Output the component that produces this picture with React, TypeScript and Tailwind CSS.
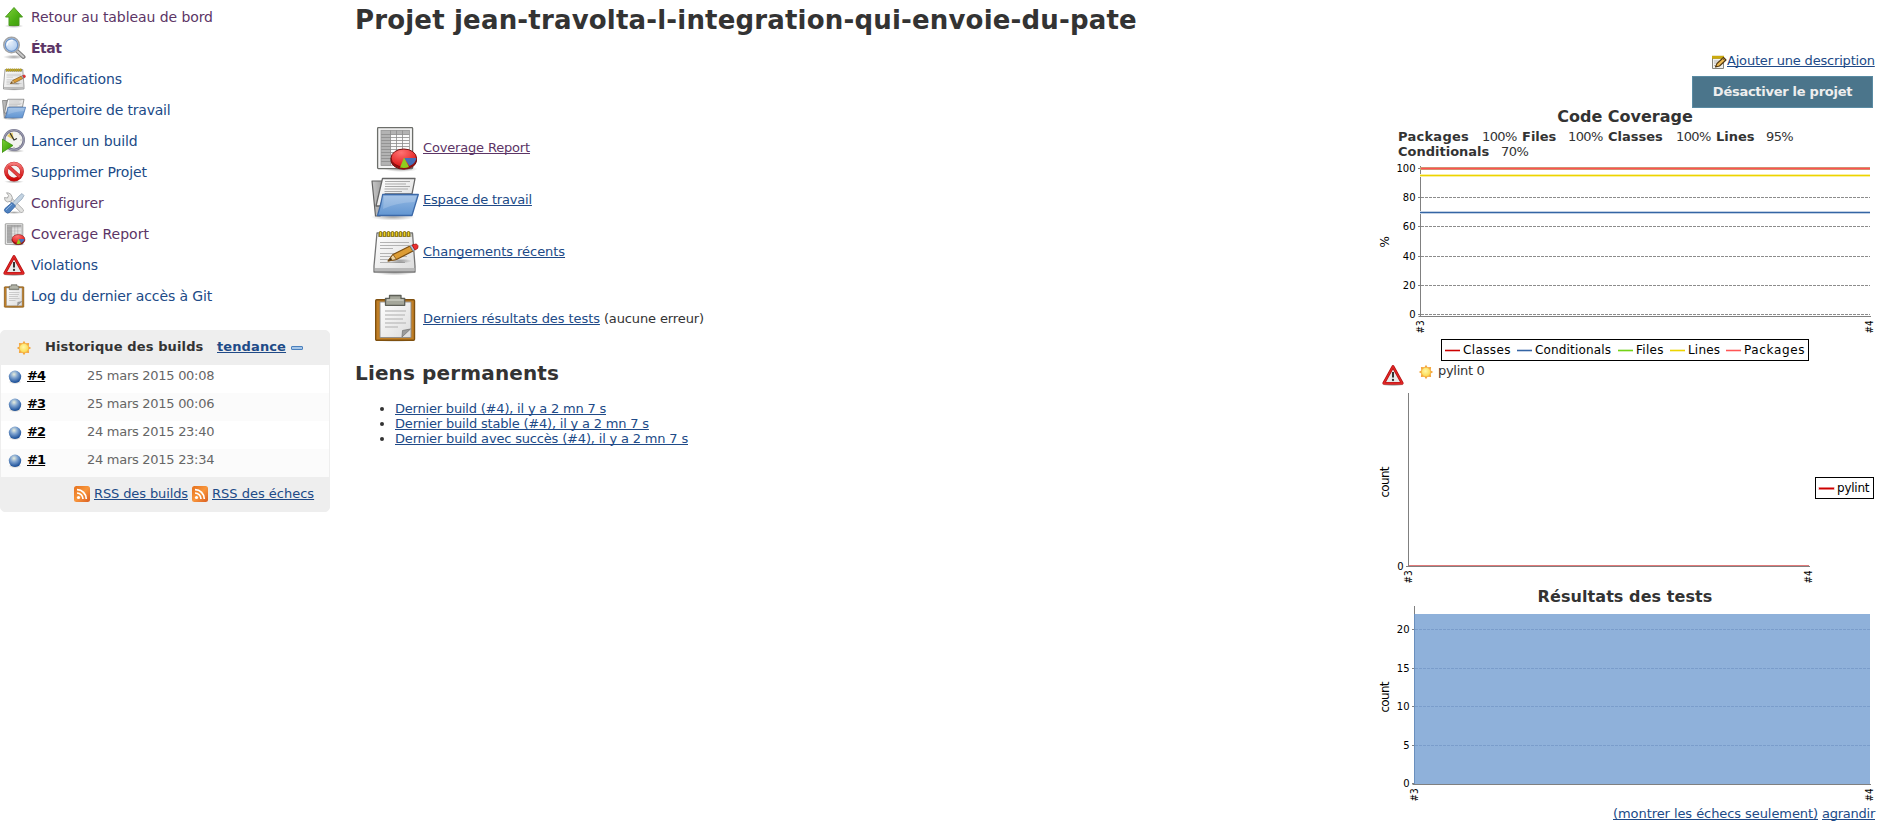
import type { ReactNode } from "react";

type IconProps = { className?: string };

const box = (children: ReactNode, className = "size-6") => (
  <svg viewBox="0 0 48 48" className={`${className} block shrink-0`} fill="none">
    {children}
  </svg>
);

const Gradients = () => (
  <svg className="absolute size-0" aria-hidden="true">
    <defs>
      <linearGradient id="green" x1="0" y1="0" x2="1" y2="1">
        <stop offset="0" stopColor="#7fd03a" />
        <stop offset="0.6" stopColor="#4cae14" />
        <stop offset="1" stopColor="#3f9a0c" />
      </linearGradient>
      <linearGradient id="paper" x1="0" y1="0" x2="1" y2="1">
        <stop offset="0" stopColor="#ffffff" />
        <stop offset="1" stopColor="#dcdcdc" />
      </linearGradient>
      <linearGradient id="folder" x1="0" y1="0" x2="0" y2="1">
        <stop offset="0" stopColor="#95b9e3" />
        <stop offset="1" stopColor="#6296d2" />
      </linearGradient>
      <linearGradient id="grey" x1="0" y1="0" x2="1" y2="0">
        <stop offset="0" stopColor="#c8c8c8" />
        <stop offset="1" stopColor="#8c8c8c" />
      </linearGradient>
      <linearGradient id="red" x1="0" y1="0" x2="0" y2="1">
        <stop offset="0" stopColor="#f57878" />
        <stop offset="1" stopColor="#cc0606" />
      </linearGradient>
      <linearGradient id="rss" x1="0" y1="0" x2="1" y2="1">
        <stop offset="0" stopColor="#e5701c" />
        <stop offset="0.5" stopColor="#f8963c" />
        <stop offset="1" stopColor="#d95e22" />
      </linearGradient>
      <radialGradient id="pie" cx="0.4" cy="0.2" r="0.8">
        <stop offset="0" stopColor="#ff7272" />
        <stop offset="1" stopColor="#dd1414" />
      </radialGradient>
      <radialGradient id="glass" cx="0.4" cy="0.35" r="0.7">
        <stop offset="0" stopColor="#e6effa" />
        <stop offset="1" stopColor="#a3c4ec" />
      </radialGradient>
      <radialGradient id="ball" cx="0.42" cy="0.3" r="0.65">
        <stop offset="0" stopColor="#e8eedd" />
        <stop offset="0.45" stopColor="#7fa3cf" />
        <stop offset="1" stopColor="#22559c" />
      </radialGradient>
      <radialGradient id="sun" cx="0.45" cy="0.4" r="0.6">
        <stop offset="0" stopColor="#fff7a8" />
        <stop offset="1" stopColor="#fbd84a" />
      </radialGradient>
      <radialGradient id="shade" cx="0.5" cy="0.5" r="0.5">
        <stop offset="0" stopColor="#000" stopOpacity="0.35" />
        <stop offset="1" stopColor="#000" stopOpacity="0" />
      </radialGradient>
    </defs>
  </svg>
);

const UpIcon = ({ className }: IconProps) =>
  box(
    <>
      <ellipse cx="24" cy="42" rx="19" ry="4" fill="url(#shade)" />
      <path d="M24 5 L41 24 H34 V41 H14 V24 H7 Z" fill="url(#green)" stroke="#4b9a1e" strokeWidth="2" strokeLinejoin="round" />
    </>,
    className,
  );

const SearchIcon = ({ className }: IconProps) =>
  box(
    <>
      <ellipse cx="24" cy="42" rx="22" ry="4.500" fill="url(#shade)" />
      <path d="M29 29 L43 42" stroke="#7d7d7d" strokeWidth="8" strokeLinecap="round" />
      <path d="M30 30 L42.500 41.500" stroke="#c9c9c9" strokeWidth="4" strokeLinecap="round" />
      <circle cx="19" cy="18" r="15.500" fill="url(#glass)" stroke="#a4a4a4" strokeWidth="3" />
      <circle cx="19" cy="18" r="12.500" stroke="#6b93c8" strokeWidth="2.500" />
      <path d="M10 19 C10 11 16 8 22 9" stroke="#fff" strokeWidth="3" opacity="0.8" />
    </>,
    className,
  );

const NotepadIcon = ({ className }: IconProps) =>
  box(
    <>
      <ellipse cx="24" cy="44.500" rx="20" ry="3" fill="url(#shade)" />
      <path d="M6 5 H41.500 L44 38 V44 H3 V38 Z" fill="url(#paper)" stroke="#757575" strokeWidth="1.300" strokeLinejoin="round" />
      <path d="M7 5.500 H40.500 V9 H7 Z" fill="#a5a38d" />
      <path d="M4 40 H43.500 V43 H4 Z" fill="#b9b9b9" />
      <path d="M9 14.500 H38 M9 17.500 H38 M9 20.500 H22 M9 25.500 H36 M9 28.500 H36 M9 31.500 H24 M9 34.500 H34" stroke="#b3b3b3" strokeWidth="1" />
      <path d="M9.500 4.500V7.500M13.500 4.500V7.500M17.500 4.500V7.500M21.500 4.500V7.500M25.500 4.500V7.500M29.500 4.500V7.500M33.500 4.500V7.500M37.500 4.500V7.500" stroke="#7d6500" strokeWidth="3.200" strokeLinecap="round" />
      <path d="M9.500 4.500V7.500M13.500 4.500V7.500M17.500 4.500V7.500M21.500 4.500V7.500M25.500 4.500V7.500M29.500 4.500V7.500M33.500 4.500V7.500M37.500 4.500V7.500" stroke="#e9cf2c" strokeWidth="1.700" strokeLinecap="round" />
      <ellipse cx="29" cy="33" rx="12" ry="2.500" fill="url(#shade)" />
      <path d="M17 33 L22 26.500 L39 18 L42 23 L25.500 31.500 Z" fill="#dc9c35" stroke="#7b4d10" strokeWidth="1.200" strokeLinejoin="round" />
      <path d="M17 33 L22 26.500 L25.500 31.500 Z" fill="#ecd3a3" stroke="#7b4d10" strokeWidth="0.800" />
      <path d="M17 33 L20 29.500 L21 32 Z" fill="#4a3210" />
      <path d="M39 18 L41 17 L44 22 L42 23 Z" fill="#a9c3d8" stroke="#6f8190" strokeWidth="0.600" />
      <path d="M41 17 L45 16 Q48 17 46.500 20.500 L44 22 Z" fill="#ec2f2f" stroke="#a50f0f" strokeWidth="0.800" />
    </>,
    className,
  );

const FolderIcon = ({ className }: IconProps) =>
  box(
    <>
      <ellipse cx="22" cy="41" rx="22" ry="3.500" fill="url(#shade)" />
      <path d="M1 5 H12 L16 20 L9 40 H4.500 Z" fill="url(#grey)" stroke="#626262" strokeWidth="1.200" strokeLinejoin="round" />
      <path d="M11.500 2.500 L5 30 H9 L14 18 H41 L44 2.500 Z" fill="url(#paper)" stroke="#666" strokeWidth="1.300" strokeLinejoin="round" />
      <path d="M14 5.500 H39 M14 8 H35 M14 10.500 H39 M13.500 13 H37 M13.500 15.500 H31" stroke="#a9a9a9" strokeWidth="1" />
      <path d="M11.700 18.500 H47.300 L41 39.500 H6.500 Q10 29 11.700 18.500 Z" fill="url(#folder)" stroke="#3c69a8" strokeWidth="1.300" strokeLinejoin="round" />
      <path d="M13 20 H45.500 L43.500 26 Q24 27 12 33 Z" fill="#fff" opacity="0.180" />
    </>,
    className,
  );

const ClockIcon = ({ className }: IconProps) =>
  box(
    <>
      <ellipse cx="26" cy="44" rx="19" ry="3.500" fill="url(#shade)" />
      <circle cx="24" cy="22" r="19.500" fill="#f3f3ee" stroke="#77778f" strokeWidth="5" />
      <circle cx="24" cy="22" r="20" stroke="#acacbe" strokeWidth="1.500" />
      <path d="M24 22 L10 14 Q14 8 21 7 Z" fill="#e6cb66" />
      <path d="M16 8 L24 22 L30 19" stroke="#34342f" strokeWidth="2.500" />
      <path d="M37 22h2M24 36v2M34 12l1-1M34 32l1 1" stroke="#999" strokeWidth="2" />
      <path d="M0 20 L22 33 L0 47 Z" fill="url(#green)" stroke="#3d8c12" strokeWidth="1.500" strokeLinejoin="round" />
    </>,
    className,
  );

const DeleteIcon = ({ className }: IconProps) =>
  box(
    <>
      <ellipse cx="24" cy="43.500" rx="20" ry="3" fill="url(#shade)" />
      <circle cx="24" cy="23" r="16" fill="#f4f4f4" stroke="#b52020" strokeWidth="7.500" />
      <path d="M12 12 L36 34" stroke="#b52020" strokeWidth="7" />
      <circle cx="24" cy="23" r="16" stroke="url(#red)" strokeWidth="6" />
      <path d="M12 12 L36 34" stroke="#e24242" strokeWidth="5" />
    </>,
    className,
  );

const ToolsIcon = ({ className }: IconProps) =>
  box(
    <>
      <ellipse cx="24" cy="43" rx="22" ry="3" fill="url(#shade)" />
      <path d="M15 15 L39 39" stroke="#999" strokeWidth="9" strokeLinecap="round" />
      <path d="M15 15 L39 39" stroke="#e2e2e0" strokeWidth="6.500" strokeLinecap="round" />
      <path d="M9 3.500 L13 9 L11 14 L5 13 Q4 20 11 22 L19 20 Q23 13 18 7 Q14 3 9 3.500Z" fill="#e6e6e4" stroke="#989898" strokeWidth="1.500" />
      <path d="M40 5 L44 9 L40 16 L26 29 L21 24 L34 10 Z" fill="#c3d3e2" stroke="#8298ad" strokeWidth="1.300" />
      <path d="M20 23 L27 30 L15 43 Q11 46 7 42 Q3 39 6 35 Z" fill="#4f82c0" stroke="#285a9c" strokeWidth="1.500" />
      <path d="M20 26 L8 38" stroke="#8db2df" strokeWidth="2" />
    </>,
    className,
  );

const ReportIcon = ({ className }: IconProps) =>
  box(
    <>
      <ellipse cx="30" cy="45" rx="17" ry="3" fill="url(#shade)" />
      <rect x="6.600" y="3.600" width="35" height="41" rx="0.800" fill="#f4f4f4" stroke="#6c6e6a" strokeWidth="1.300" />
      <rect x="10" y="6" width="28.500" height="36" fill="#fafafa" />
      <path d="M10 6 H38.500 V10.500 H10 Z M10 10 H19.500 V42 H10 Z" fill="#b3b3b3" />
      <path d="M10 10.500H38.500M10 13.500H38.500M10 16.500H38.500M10 19.500H38.500M10 22.500H38.500M10 25.500H38.500M10 28.500H38.500M10 31.500H38.500M10 34.500H38.500M10 37.500H38.500M19.500 6V41.500M25.500 6V41.500M31.500 6V41.500" stroke="#8b8b8b" strokeWidth="0.800" />
      <rect x="10" y="6.300" width="28.500" height="35" stroke="#999" strokeWidth="0.800" />
      <path d="M20 34 V37 A12.800 9 0 0 0 45.500 37 V34 Z" fill="#9d0e0e" stroke="#6d1010" strokeWidth="1" />
      <ellipse cx="32.800" cy="34" rx="12.700" ry="9" fill="url(#pie)" stroke="#7d1010" strokeWidth="1" />
      <path d="M33 34 H45.300 Q45 39 38.500 42 Z" fill="#466fb8" />
      <path d="M33 33.500 L38 43 Q34 44.500 29 43.500 Z" fill="#8fce1e" />
    </>,
    className,
  );

const WarningIcon = ({ className }: IconProps) =>
  box(
    <>
      <ellipse cx="24" cy="44" rx="22" ry="3" fill="url(#shade)" />
      <path d="M24 7 L42.500 40.500 H5.500 Z" fill="#e8eaea" stroke="#b31010" strokeWidth="5.500" strokeLinejoin="round" />
      <path d="M24 7 L42.500 40.500 H5.500 Z" stroke="#e02626" strokeWidth="3" strokeLinejoin="round" />
      <path d="M24 18 V29" stroke="#333" strokeWidth="4" />
      <circle cx="24" cy="34" r="2.300" fill="#333" />
    </>,
    className,
  );

const ClipboardIcon = ({ className }: IconProps) =>
  box(
    <>
      <ellipse cx="24" cy="46" rx="21" ry="2" fill="url(#shade)" />
      <rect x="4.700" y="5.700" width="38.800" height="40.600" rx="1" fill="#c07f27" stroke="#7f500f" strokeWidth="1.400" />
      <path d="M9 8 H40 V43.500 H9 Z" fill="url(#paper)" stroke="#8c8c8c" strokeWidth="0.900" />
      <path d="M14 17H35M14 21H34M14 25H32M14 29H35M14 33H27" stroke="#c4c4c4" strokeWidth="1.700" />
      <path d="M31 43 L31.500 36.500 L39.500 35 Z" fill="#9b9b9b" stroke="#777" strokeWidth="0.800" />
      <path d="M18.500 1.500 H30 V4.500 H33.700 V11.300 H14.500 V4.500 H18.500 Z" fill="#a4a69a" stroke="#5e6058" strokeWidth="1.300" strokeLinejoin="round" />
      <path d="M16 6 H32.500" stroke="#cfd1c8" strokeWidth="1.300" />
    </>,
    className,
  );

const SunIcon = () => (
  <svg viewBox="0 0 16 16" className="block size-4 shrink-0">
    <path
      d="M8 .8 9.500 3.300 13.100 2.900 12.700 6.500 15.200 8 12.700 9.500 13.100 13.100 9.500 12.700 8 15.200 6.500 12.700 2.900 13.100 3.300 9.500 .8 8 3.300 6.500 2.900 2.900 6.500 3.300Z"
      fill="#f4a53b"
    />
    <circle cx="8" cy="8" r="4.600" fill="url(#sun)" stroke="#f3b24a" strokeWidth="0.500" />
  </svg>
);

const BallIcon = () => (
  <svg viewBox="0 0 16 16" className="block size-4 shrink-0">
    <ellipse cx="8" cy="13" rx="6.500" ry="2" fill="url(#shade)" />
    <circle cx="8" cy="7.800" r="6.200" fill="url(#ball)" />
  </svg>
);

const RssIcon = () => (
  <svg viewBox="0 0 16 16" className="block size-4 shrink-0" fill="none">
    <rect width="16" height="16" rx="2.500" fill="url(#rss)" />
    <circle cx="4.500" cy="11.500" r="1.600" fill="#fff" />
    <path d="M3 7 A6 6 0 0 1 9 13 M3 3.700 A9.300 9.300 0 0 1 12.300 13" stroke="#fff" strokeWidth="1.700" />
  </svg>
);

const EditIcon = () => (
  <svg viewBox="0 0 16 16" className="block size-4 shrink-0" fill="none">
    <path d="M1.500 2.500H12.500V14.500H1.500Z" fill="#f1f1ef" stroke="#85857d" />
    <path d="M1 3.300H13" stroke="#a38200" strokeWidth="3" />
    <path d="M1.500 3.300H13" stroke="#f2d21c" strokeWidth="2.600" strokeDasharray="1 1" />
    <path d="M3 7H8M3 9H6M3 11.500H5" stroke="#bbb" />
    <path d="M4.500 13 L6 9.500 L12.500 3.500 L15 6 L8.500 12 Z" fill="#eebb55" stroke="#52380f" strokeWidth="1.100" strokeLinejoin="round" />
    <path d="M11.500 4.500 L14 7" stroke="#7b6a48" strokeWidth="1" />
  </svg>
);

const tasks = [
  { Icon: UpIcon, label: "Retour au tableau de bord", color: "text-[#5c3566]", tracking: "tracking-[-0.080px]" },
  { Icon: SearchIcon, label: "État", color: "text-[#5c3566] font-bold", tracking: "tracking-[-0.500px]" },
  { Icon: NotepadIcon, label: "Modifications", color: "text-[#204a87]", tracking: "tracking-[-0.130px]" },
  { Icon: FolderIcon, label: "Répertoire de travail", color: "text-[#204a87]", tracking: "tracking-[-0.210px]" },
  { Icon: ClockIcon, label: "Lancer un build", color: "text-[#204a87]", tracking: "tracking-[-0.130px]" },
  { Icon: DeleteIcon, label: "Supprimer Projet", color: "text-[#204a87]", tracking: "tracking-[-0.120px]" },
  { Icon: ToolsIcon, label: "Configurer", color: "text-[#5c3566]", tracking: "tracking-[-0.100px]" },
  { Icon: ReportIcon, label: "Coverage Report", color: "text-[#5c3566]", tracking: "tracking-[0px]" },
  { Icon: WarningIcon, label: "Violations", color: "text-[#204a87]", tracking: "tracking-[-0.150px]" },
  { Icon: ClipboardIcon, label: "Log du dernier accès à Git", color: "text-[#204a87]", tracking: "tracking-[-0.100px]" },
];

const builds = [
  { id: "#4", date: "25 mars 2015 00:08", bg: "bg-white" },
  { id: "#3", date: "25 mars 2015 00:06", bg: "bg-[#fbfbfb]" },
  { id: "#2", date: "24 mars 2015 23:40", bg: "bg-white" },
  { id: "#1", date: "24 mars 2015 23:34", bg: "bg-[#fbfbfb]" },
];

const link = "text-[#204a87] underline";

function Sidebar() {
  return (
    <aside className="w-[330px] shrink-0 pt-[2px]">
      <nav className="flex flex-col">
        {tasks.map(({ Icon, label, color, tracking }) => (
          <a key={label} className={`flex h-[31px] items-center gap-[5px] pb-[1px] pl-[2px] text-[14px] leading-[18px] ${color} ${tracking}`}>
            <Icon className="size-6" />
            <span>{label}</span>
          </a>
        ))}
      </nav>
      <section className="mt-[18px] overflow-hidden rounded-[5px] border border-[#eeeeee] bg-[#eeeeee]">
        <header className="flex h-[34px] items-start pt-[8px] pl-[15px] font-bold">
          <span className="pt-px">
            <SunIcon />
          </span>
          <span className="ml-[13px] w-[159px] tracking-[0.120px]">Historique des builds</span>
          <a className={`${link} ml-[13px] w-[69px] tracking-[0.110px]`}>tendance</a>
          <span className="mt-[7px] ml-[5px] h-1 w-3 rounded-[1px] border border-[#4a80bd] bg-[#a6c6e8]" />
        </header>
        {builds.map((b) => (
          <div key={b.id} className={`flex h-[28px] items-start pt-[3px] pl-[6px] ${b.bg}`}>
            <div className="pt-px">
              <BallIcon />
            </div>
            <a className="ml-1 w-[60px] font-bold tracking-[-0.900px] text-black underline">{b.id}</a>
            <span className="tracking-[-0.280px] text-[#666666]">{b.date}</span>
          </div>
        ))}
        <footer className="flex h-[34px] items-start pt-[9px] pl-[73px]">
          <RssIcon />
          <a className={`${link} ml-1 w-[94px] tracking-[-0.112px]`}>RSS des builds</a>
          <span className="ml-1">
            <RssIcon />
          </span>
          <a className={`${link} ml-1`}>RSS des échecs</a>
        </footer>
      </section>
    </aside>
  );
}

function Summary() {
  return (
    <div className="flex-1 pt-[89px]">
      <div className="flex flex-col gap-1 pl-4">
        <div className="flex items-center gap-1">
          <ReportIcon className="size-12" />
          <a className="pb-[2px] tracking-[-0.170px] text-[#5c3566] underline">Coverage Report</a>
        </div>
        <div className="flex items-center gap-1">
          <FolderIcon className="size-12" />
          <a className={`${link} pb-[2px] tracking-[-0.190px]`}>Espace de travail</a>
        </div>
        <div className="flex items-center gap-1">
          <NotepadIcon className="size-12" />
          <a className={`${link} pb-[2px] tracking-[-0.050px]`}>Changements récents</a>
        </div>
        <div className="mt-[14px] flex items-center gap-1">
          <ClipboardIcon className="size-12" />
          <span>
            <a className={`${link} tracking-[-0.070px]`}>Derniers résultats des tests</a>
            <span className="tracking-[-0.120px]"> (aucune erreur)</span>
          </span>
        </div>
      </div>
      <h2 className="mt-[19px] text-[20px] leading-6 font-bold tracking-[0.140px]">Liens permanents</h2>
      <ul className="mt-4 list-disc pl-10 marker:text-[#333333]">
        <li>
          <a className={`${link} tracking-[-0.200px]`}>Dernier build (#4), il y a 2 mn 7 s</a>
        </li>
        <li>
          <a className={`${link} tracking-[-0.190px]`}>Dernier build stable (#4), il y a 2 mn 7 s</a>
        </li>
        <li>
          <a className={`${link} tracking-[-0.174px]`}>Dernier build avec succès (#4), il y a 2 mn 7 s</a>
        </li>
      </ul>
    </div>
  );
}

type Tick = { label: string; y: number };

function Axis({ x, top, bottom, right, ticks, builds: marks }: { x: number; top: number; bottom: number; right: number; ticks: Tick[]; builds: { label: string; x: number }[] }) {
  return (
    <g>
      <path d={`M${x} ${top} V${bottom + 0.5} M${x - 2} ${bottom} H${right}`} stroke="#808080" />
      {ticks.map((t) => (
        <g key={t.label}>
          <path d={`M${x - 2.5} ${t.y} H${x}`} stroke="#808080" />
          <text x={x - 5} y={t.y + 3.5} fontSize="10" textAnchor="end">
            {t.label}
          </text>
        </g>
      ))}
      {marks.map((m) => (
        <text key={m.label} transform={`translate(${m.x + 3.5} ${bottom + 17}) rotate(-90)`} fontSize="10" textLength="13" lengthAdjust="spacingAndGlyphs">
          {m.label}
        </text>
      ))}
    </g>
  );
}

function CoverageChart() {
  const ticks = [
    { label: "100", y: 168.5 },
    { label: "80", y: 197.5 },
    { label: "60", y: 226.5 },
    { label: "40", y: 256.5 },
    { label: "20", y: 285.5 },
    { label: "0", y: 314.5 },
  ];
  const legend = [
    { label: "Classes", x: 1445, w: 47.5, color: "#cc0000", halo: "#f1b5b5" },
    { label: "Conditionals", x: 1517, w: 76, color: "#3465a4", halo: "#c5d2e6" },
    { label: "Files", x: 1618, w: 27.5, color: "#73d216", halo: "#d2f0b6" },
    { label: "Lines", x: 1670, w: 32, color: "#edd400", halo: "#f9f2b0" },
    { label: "Packages", x: 1726, w: 60.5, color: "#ff5555", halo: "#ffd0d0" },
  ];
  return (
    <svg viewBox="1375 160 500 202" className="block h-[202px] w-[500px]" fill="none">
      <g fill="#000">
        {ticks.slice(1).map((t) => (
          <path key={t.y} d={`M1421 ${t.y} H1870`} stroke="#8c8c8c" strokeDasharray="3 1" />
        ))}
        <Axis x={1420.5} top={166} bottom={316.5} right={1871} ticks={ticks} builds={[{ label: "#3", x: 1420.5 }, { label: "#4", x: 1869.5 }]} />
        <text transform="translate(1389 247.500) rotate(-90)" fontSize="12">
          %
        </text>
      </g>
      <path d="M1420 168.500 H1870" stroke="#c4a478" strokeWidth="3" />
      <path d="M1421 168.500 H1870" stroke="#ff5050" strokeWidth="1.600" />
      <path d="M1420 175.500 H1870" stroke="#f9f0a0" strokeWidth="3" />
      <path d="M1420 175.500 H1870" stroke="#edd400" />
      <path d="M1420 212.500 H1870" stroke="#c2d1e4" strokeWidth="3" />
      <path d="M1420 212.500 H1870" stroke="#3465a4" />
      <rect x="1441.500" y="339.500" width="367" height="21" fill="#fff" stroke="#000" />
      {legend.map((l) => (
        <g key={l.label}>
          <path d={`M${l.x} 350.500 h15`} stroke={l.halo} strokeWidth="3" />
          <path d={`M${l.x} 350.500 h15`} stroke={l.color} />
          <text x={l.x + 18} y="354" fill="#000" fontSize="12" textLength={l.w}>
            {l.label}
          </text>
        </g>
      ))}
    </svg>
  );
}

function ViolationsChart() {
  return (
    <svg viewBox="1375 388 500 200" className="block h-[200px] w-[500px]" fill="none">
      <g fill="#000">
        <Axis x={1408.5} top={393} bottom={566.5} right={1810} ticks={[{ label: "0", y: 566.5 }]} builds={[{ label: "#3", x: 1408.5 }, { label: "#4", x: 1808.5 }]} />
        <text transform="translate(1389 497.500) rotate(-90)" fontSize="12" textLength="31">
          count
        </text>
      </g>
      <path d="M1409 565.500 H1809" stroke="#e07a7a" />
      <rect x="1815.500" y="477.500" width="58" height="21" stroke="#000" />
      <path d="M1818.500 488.500 h16" stroke="#f0a0a0" strokeWidth="3" />
      <path d="M1819 488.500 h15" stroke="#cc0000" strokeWidth="1.400" />
      <text x="1837" y="492" fill="#000" fontSize="12" textLength="32.500">
        pylint
      </text>
    </svg>
  );
}

function TestChart() {
  const ticks = [
    { label: "20", y: 629.5 },
    { label: "15", y: 668.5 },
    { label: "10", y: 706.5 },
    { label: "5", y: 745.5 },
    { label: "0", y: 783.5 },
  ];
  return (
    <svg viewBox="1375 605 500 200" className="block h-[200px] w-[500px]" fill="none">
      <rect x="1415" y="614" width="455" height="170" fill="#8fb1da" />
      {ticks.slice(0, 4).map((t) => (
        <path key={t.y} d={`M1415 ${t.y} H1870`} stroke="#7a9dcb" strokeDasharray="3 1" />
      ))}
      <g fill="#000">
        <Axis x={1414.5} top={606} bottom={784.5} right={1871} ticks={ticks} builds={[{ label: "#3", x: 1414.5 }, { label: "#4", x: 1869.5 }]} />
        <text transform="translate(1389 712.500) rotate(-90)" fontSize="12" textLength="31">
          count
        </text>
      </g>
      <path d="M1414.500 614 V784" stroke="#6a8fbd" />
    </svg>
  );
}

const coverage = [
  { name: "Packages", value: "100%", nameClass: "w-[71px] tracking-[0.260px]", valueClass: "ml-[13px] w-[35px]" },
  { name: "Files", value: "100%", nameClass: "ml-[5px] w-[33px]", valueClass: "ml-[13px] w-[35px]" },
  { name: "Classes", value: "100%", nameClass: "ml-[5px] w-[55px]", valueClass: "ml-[13px] w-[35px]" },
  { name: "Lines", value: "95%", nameClass: "ml-[5px] w-[38px]", valueClass: "ml-[12px] w-[27px]" },
];

function Trends() {
  return (
    <div className="w-[500px] shrink-0 pt-[18px]">
      <div className="flex h-[15px] justify-end">
        <span className="pt-[1px]">
          <EditIcon />
        </span>
        <a className={`${link} w-[148px] tracking-[-0.190px] whitespace-nowrap`}>Ajouter une description</a>
      </div>
      <div className="mt-2 flex justify-end pr-[2px]">
        <button className="h-8 w-[181px] border border-[#5a8ba3] bg-[#4b758b] pb-[2px] text-[13px] leading-[15px] font-bold tracking-[-0.270px] text-[#eeeeee]">
          Désactiver le projet
        </button>
      </div>
      <h3 className="pt-px text-center text-[16px] leading-4 font-bold">Code Coverage</h3>
      <div className="mt-[4px] pl-[23px]">
        <div className="flex">
          {coverage.map((c) => (
            <span key={c.name} className="flex">
              <b className={c.nameClass}>{c.name}</b>
              <span className={`${c.valueClass} tracking-[-0.600px]`}>{c.value}</span>
            </span>
          ))}
        </div>
        <div className="flex">
          <b className="w-[91px]">Conditionals</b>
          <span className="ml-3 tracking-[-0.500px]">70%</span>
        </div>
      </div>
      <div className="mt-px">
        <CoverageChart />
      </div>
      <div className="-mt-[2px] flex h-7 items-start pl-[6px]">
        <span className="pt-[3px]">
          <WarningIcon className="size-6" />
        </span>
        <span className="ml-[13px] pt-1">
          <SunIcon />
        </span>
        <span className="ml-1 pt-[3px] tracking-[-0.300px]">pylint 0</span>
      </div>
      <ViolationsChart />
      <h3 className="text-center text-[16px] leading-[17px] font-bold tracking-[0.080px]">Résultats des tests</h3>
      <TestChart />
      <div className="mt-px flex justify-end gap-1">
        <a className={`${link} tracking-[-0.073px]`}>(montrer les échecs seulement)</a>
        <a className={`${link} tracking-[-0.250px]`}>agrandir</a>
      </div>
    </div>
  );
}

export default function App() {
  return (
    <div className="flex h-[839px] w-[1890px] overflow-hidden bg-white pr-[15px] font-['DejaVu_Sans',sans-serif] text-[13px] leading-[15px] text-[#333333] [&_a]:underline-offset-[1px] [&_a]:[text-decoration-skip-ink:none]">
      <Gradients />
      <Sidebar />
      <main className="ml-[25px] flex flex-1 flex-col">
        <h1 className="pt-[5px] text-[26px] leading-[30px] font-bold tracking-[0.180px]">Projet jean-travolta-l-integration-qui-envoie-du-pate</h1>
        <div className="flex">
          <Summary />
          <Trends />
        </div>
      </main>
    </div>
  );
}
